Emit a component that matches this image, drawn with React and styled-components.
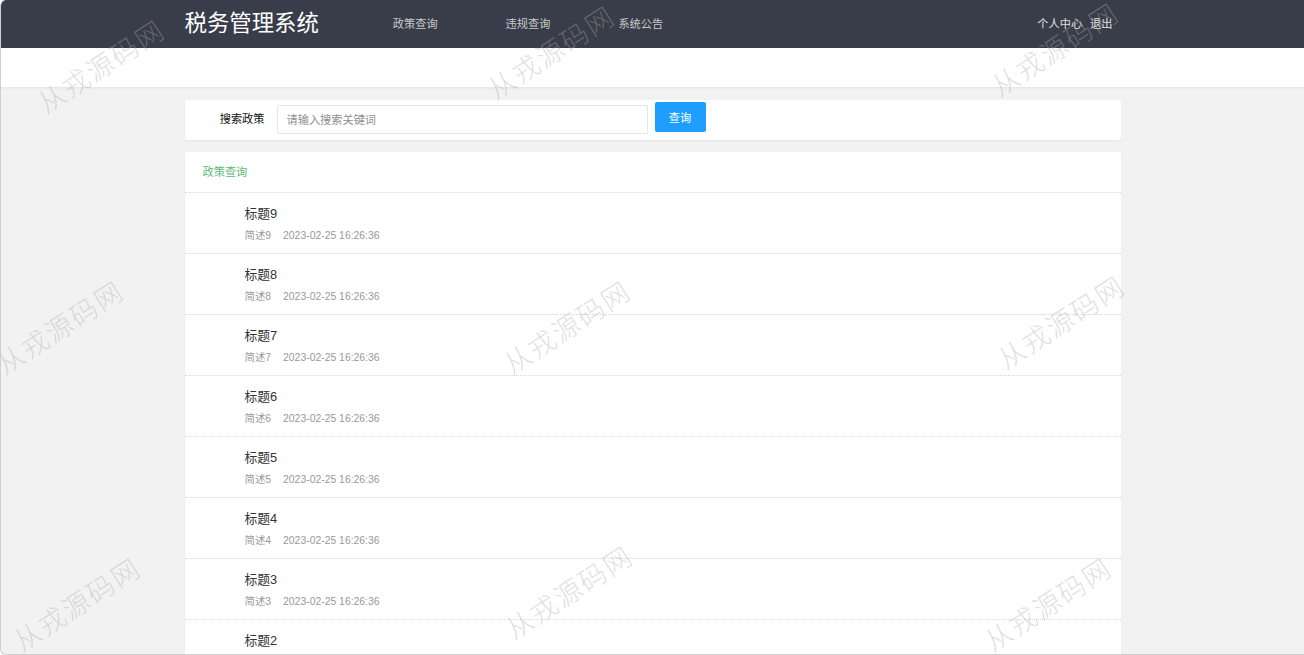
import React from 'react'
import styled, { createGlobalStyle } from 'styled-components'

const GlobalStyle = createGlobalStyle`
	html, body {
		margin: 0;
		padding: 0;
		background: #fff;
		overflow: hidden;
	}
	* { box-sizing: border-box; }
`

const FONT = `"Liberation Sans", "Noto Sans CJK SC", sans-serif`

const policies = [9, 8, 7, 6, 5, 4, 3, 2, 1].map(n => ({
	title: `标题${n}`,
	summary: `简述${n}`,
	time: '2023-02-25 16:26:36',
}))

const marks = [
	{ x: 49, y: 82 }, { x: 499, y: 68 }, { x: 1003, y: 65 },
	{ x: 8, y: 343 }, { x: 515, y: 343 }, { x: 1009, y: 338 },
	{ x: 25, y: 620 }, { x: 517, y: 608 }, { x: 996, y: 620 },
]

const Frame = styled.div`
	position: relative;
	width: 1304px;
	height: 655px;
	overflow: hidden;
	background: #f2f2f2;
	border-left: 1px solid #cfcfcf;
	border-bottom: 1px solid #cfcfcf;
	border-radius: 6px 0 0 6px;
	font-family: ${FONT};
	display: flex;
	flex-direction: column;
`

const Header = styled.header`
	height: 48px;
	flex-shrink: 0;
	background: #393d49;
`

const Container = styled.div`
	width: 936px;
	margin: 0 auto;
`

const HeaderInner = styled(Container)`
	height: 100%;
	display: flex;
	align-items: center;
`

const Logo = styled.div`
	color: #fff;
	font-size: 22.4px;
	line-height: 48px;
`

const Nav = styled.nav`
	display: flex;
	gap: 68px;
	margin-left: 74px;
	flex: 1;
	transform: translateY(-1px);
`

const NavItem = styled.a`
	color: ${p => p.$light ? '#e2e2e2' : '#c9c9c9'};
	font-size: 11.2px;
	text-decoration: none;
	cursor: pointer;
`

const UserNav = styled.div`
	display: flex;
	gap: 8px;
	margin-right: 8px;
	transform: translateY(-1px);
`

const Band = styled.div`
	height: 40px;
	flex-shrink: 0;
	background: #fff;
	border-bottom: 1px solid #e8e8e8;
	box-shadow: 0 1px 2px rgba(0, 0, 0, 0.04);
`

const Main = styled(Container)`
	padding-top: 12px;
	display: flex;
	flex-direction: column;
	gap: 12px;
`

const Card = styled.div`
	background: #fff;
	border-radius: 2px;
	box-shadow: 0 1px 2px rgba(0, 0, 0, 0.05);
`

const SearchCard = styled(Card)`
	height: 40px;
	display: flex;
	align-items: flex-start;
	padding-top: 2px;
`

const Label = styled.label`
	width: 80px;
	margin-top: 3px;
	line-height: 29px;
	text-align: right;
	font-size: 11.2px;
	color: #111;
	margin-right: 12px;
`

const Input = styled.input`
	width: 371px;
	height: 29px;
	margin-top: 3px;
	border: 1px solid #e6e6e6;
	border-radius: 2px;
	padding: 0 9px;
	font-family: ${FONT};
	font-size: 11.2px;
	outline: none;
	&::placeholder { color: #8f8f8f; }
`

const Button = styled.button`
	width: 51px;
	height: 30px;
	margin-left: 7px;
	border: none;
	border-radius: 2px;
	background: #1e9fff;
	color: #fff;
	font-family: ${FONT};
	font-size: 11.2px;
	cursor: pointer;
`

const ListHeader = styled.div`
	height: 41px;
	line-height: 40px;
	padding-left: 18px;
	font-size: 11.2px;
	color: #5fb878;
	border-bottom: 1px dotted #d6d6d6;
`

const Row = styled.div`
	height: 61px;
	padding: 10px 0 0 60px;
	border-bottom: 1px dotted #d6d6d6;
`

const Title = styled.div`
	font-size: 12.8px;
	line-height: 22px;
	color: #333;
`

const Meta = styled.div`
	margin-top: 2px;
	font-size: 10.4px;
	line-height: 18px;
	color: #999;
	display: flex;
	gap: 12px;
`

const Watermarks = styled.div`
	position: absolute;
	inset: 0;
	pointer-events: none;
`

const Mark = styled.span`
	position: absolute;
	font-family: "Liberation Serif", "Noto Sans CJK SC", serif;
	font-weight: 300;
	font-size: 27px;
	letter-spacing: 2px;
	color: rgba(170, 170, 170, 0.38);
	white-space: nowrap;
	transform: rotate(-33deg);
	transform-origin: left bottom;
`

export default function App() {
	return (
		<Frame>
			<GlobalStyle />
			<Header>
				<HeaderInner>
					<Logo>税务管理系统</Logo>
					<Nav>
						<NavItem>政策查询</NavItem>
						<NavItem>违规查询</NavItem>
						<NavItem>系统公告</NavItem>
					</Nav>
					<UserNav>
						<NavItem $light>个人中心</NavItem>
						<NavItem $light>退出</NavItem>
					</UserNav>
				</HeaderInner>
			</Header>
			<Band />
			<Main>
				<SearchCard>
					<Label>搜索政策</Label>
					<Input placeholder="请输入搜索关键词" />
					<Button>查询</Button>
				</SearchCard>
				<Card>
					<ListHeader>政策查询</ListHeader>
					{policies.map(item => (
						<Row key={item.title}>
							<Title>{item.title}</Title>
							<Meta>
								<span>{item.summary}</span>
								<span>{item.time}</span>
							</Meta>
						</Row>
					))}
				</Card>
			</Main>
			<Watermarks>
				{marks.map((m, i) => (
					<Mark key={i} style={{ left: m.x, top: m.y }}>从戎源码网</Mark>
				))}
			</Watermarks>
		</Frame>
	)
}
